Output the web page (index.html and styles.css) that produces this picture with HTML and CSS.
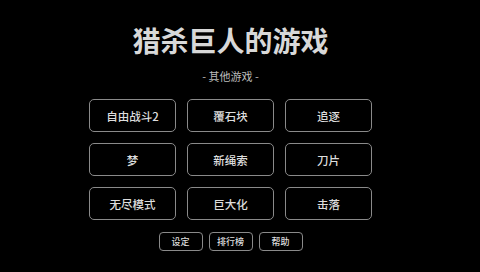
FILE: index.html
```html
<!DOCTYPE html>
<html lang="zh">
<head>
  <meta charset="UTF-8">
  <meta name="viewport" content="width=device-width, initial-scale=1.0">
  <title>猎杀巨人的游戏</title>
  <link rel="stylesheet" href="styles.css">
</head>
<body>
  <div id="menu">
    <h1 class="title">猎杀巨人的游戏</h1>
    <p class="subtitle">- 其他游戏 -</p>
    <div class="games">
      <button class="game">自由战斗2</button>
      <button class="game">覆石块</button>
      <button class="game">追逐</button>
      <button class="game">梦</button>
      <button class="game">新绳索</button>
      <button class="game">刀片</button>
      <button class="game">无尽模式</button>
      <button class="game">巨大化</button>
      <button class="game">击落</button>
    </div>
    <div class="options">
      <button class="option">设定</button>
      <button class="option">排行榜</button>
      <button class="option">帮助</button>
    </div>
  </div>
</body>
</html>
```
FILE: styles.css
```css
html, body {
  margin: 0;
  background: #000;
}

body {
  width: 480px;
  height: 272px;
  overflow: hidden;
  font-family: "Noto Sans CJK SC", "Noto Sans", sans-serif;
  color: #ddd;
}

#menu {
  width: 461px;
  display: flex;
  flex-direction: column;
  align-items: center;
}

.title {
  margin: 24px 0 0;
  font-size: 28px;
  line-height: 32px;
  font-weight: bold;
  color: #d8d8d8;
}

.subtitle {
  margin: 12px 0 0;
  font-size: 11px;
  line-height: 16px;
  color: #bbb;
}

.games {
  margin-top: 15px;
  display: grid;
  grid-template-columns: repeat(3, 87px);
  grid-auto-rows: 33px;
  gap: 11px;
}

button {
  font-family: inherit;
  font-weight: 500;
  background: #000;
  color: #ddd;
  border: 1.5px solid #8a8a8a;
  border-radius: 5px;
  padding: 0;
  cursor: pointer;
}

.game {
  font-size: 11.5px;
}

.options {
  margin-top: 12px;
  display: flex;
  gap: 6px;
}

.option {
  width: 44px;
  height: 19px;
  font-size: 9px;
  border-radius: 4px;
}
```
